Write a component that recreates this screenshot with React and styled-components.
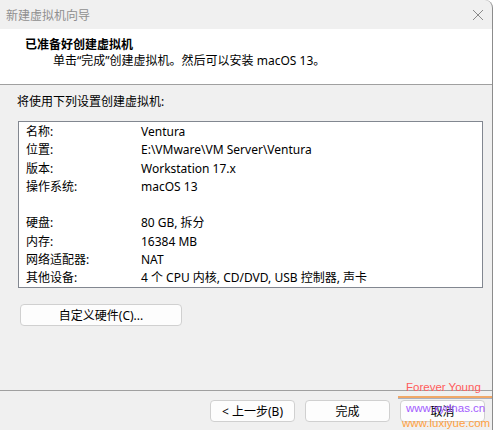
import styled, { createGlobalStyle } from "styled-components";

const Global = createGlobalStyle`
  html, body { margin: 0; padding: 0; background: #ffffff; }
  body {
    font-family: "Segoe UI", "Noto Sans", "Noto Sans CJK SC", sans-serif;
    font-size: 12px;
    color: #000;
  }
`;

const Window = styled.div`
  position: relative;
  width: 492px;
  height: 430px;
  background: #f0f0f0;
  border-right: 1px solid #8c8c8c;
  border-top-right-radius: 8px;
  display: flex;
  flex-direction: column;
  overflow: hidden;
`;

const TitleBar = styled.div`
  height: 29px;
  display: flex;
  align-items: center;
  justify-content: space-between;
  padding: 0 8px 0 6px;
  color: #8f8f8f;
  font-family: "Noto Sans CJK SC", sans-serif;
`;

const Header = styled.div`
  background: #ffffff;
  height: 56px;
  box-sizing: border-box;
  padding: 7px 0 0 25px;
  border-bottom: 1px solid #a0a0a0;
  line-height: 16px;
`;

const Heading = styled.div`
  font-weight: bold;
  font-family: "Noto Sans CJK SC", sans-serif;
`;

const Sub = styled.div`
  padding-left: 28px;
  margin-top: 1px;
`;

const Body = styled.div`
  flex: 1;
  padding: 9px 10px 0 18px;
`;

const Intro = styled.div`
  line-height: 16px;
  margin-left: -1px;
`;

const SummaryBox = styled.div`
  margin-top: 11px;
  width: 465px;
  box-sizing: border-box;
  border: 1px solid #828790;
  background: #ffffff;
  padding: 1px 0 0 7px;
  height: 167px;
`;

const Row = styled.div`
  display: grid;
  grid-template-columns: 115px 1fr;
  height: 18.25px;
  line-height: 18.25px;
  white-space: nowrap;
`;

const PlainButton = styled.button`
  font: inherit;
  color: #000;
  background: #fdfdfd;
  border: 1px solid #d0d0d0;
  border-radius: 4px;
  height: 22px;
  width: ${({ w }) => w}px;
  padding: 0;
  display: flex;
  align-items: center;
  justify-content: center;
`;

const CustomRow = styled.div`
  margin-top: 16px;
  margin-left: 2px;
`;

const Footer = styled.div`
  height: 40px;
  border-top: 1px solid #a0a0a0;
  box-sizing: border-box;
  display: flex;
  justify-content: flex-end;
  gap: 10px;
  padding: 9px 7px 0 0;
`;

const Watermark = styled.div`
  position: absolute;
  left: ${({ x }) => x}px;
  top: ${({ y }) => y}px;
  font-family: "Liberation Sans", sans-serif;
  font-size: 11.5px;
  color: ${({ c }) => c};
  white-space: nowrap;
  line-height: 14px;
  pointer-events: none;
`;

const WaterLine = styled.div`
  position: absolute;
  left: 398px;
  top: 396px;
  width: 94px;
  height: 2px;
  background: #f0a868;
  border-bottom: 1px solid #a8b0c0;
`;

const CloseIcon = () => (
  <svg width="12" height="12" viewBox="0 0 12 12">
    <path d="M1 1 L11 11 M11 1 L1 11" stroke="#8a8a8a" strokeWidth="1" fill="none" />
  </svg>
);

const rows = [
  ["名称:", "Ventura"],
  ["位置:", "E:\\VMware\\VM Server\\Ventura"],
  ["版本:", "Workstation 17.x"],
  ["操作系统:", "macOS 13"],
  ["", ""],
  ["硬盘:", "80 GB, 拆分"],
  ["内存:", "16384 MB"],
  ["网络适配器:", "NAT"],
  ["其他设备:", "4 个 CPU 内核, CD/DVD, USB 控制器, 声卡"],
];

export default function App() {
  return (
    <>
      <Global />
      <Window>
        <TitleBar>
          <span>新建虚拟机向导</span>
          <CloseIcon />
        </TitleBar>
        <Header>
          <Heading>已准备好创建虚拟机</Heading>
          <Sub>单击“完成”创建虚拟机。然后可以安装 macOS 13。</Sub>
        </Header>
        <Body>
          <Intro>将使用下列设置创建虚拟机:</Intro>
          <SummaryBox>
            {rows.map(([k, v], i) => (
              <Row key={i}>
                <span>{k}</span>
                <span>{v}</span>
              </Row>
            ))}
          </SummaryBox>
          <CustomRow>
            <PlainButton w={162}>自定义硬件(C)...</PlainButton>
          </CustomRow>
        </Body>
        <Footer>
          <PlainButton w={85}>&lt; 上一步(B)</PlainButton>
          <PlainButton w={85}>完成</PlainButton>
          <PlainButton w={85}>取消</PlainButton>
        </Footer>
        <Watermark x={406} y={380} c="#ff5c5c">Forever Young</Watermark>
        <WaterLine />
        <Watermark x={406} y={401} c="#a35cff">www.xydnas.cn</Watermark>
        <Watermark x={402} y={416} c="#ffa040">www.luxiyue.com</Watermark>
      </Window>
    </>
  );
}
